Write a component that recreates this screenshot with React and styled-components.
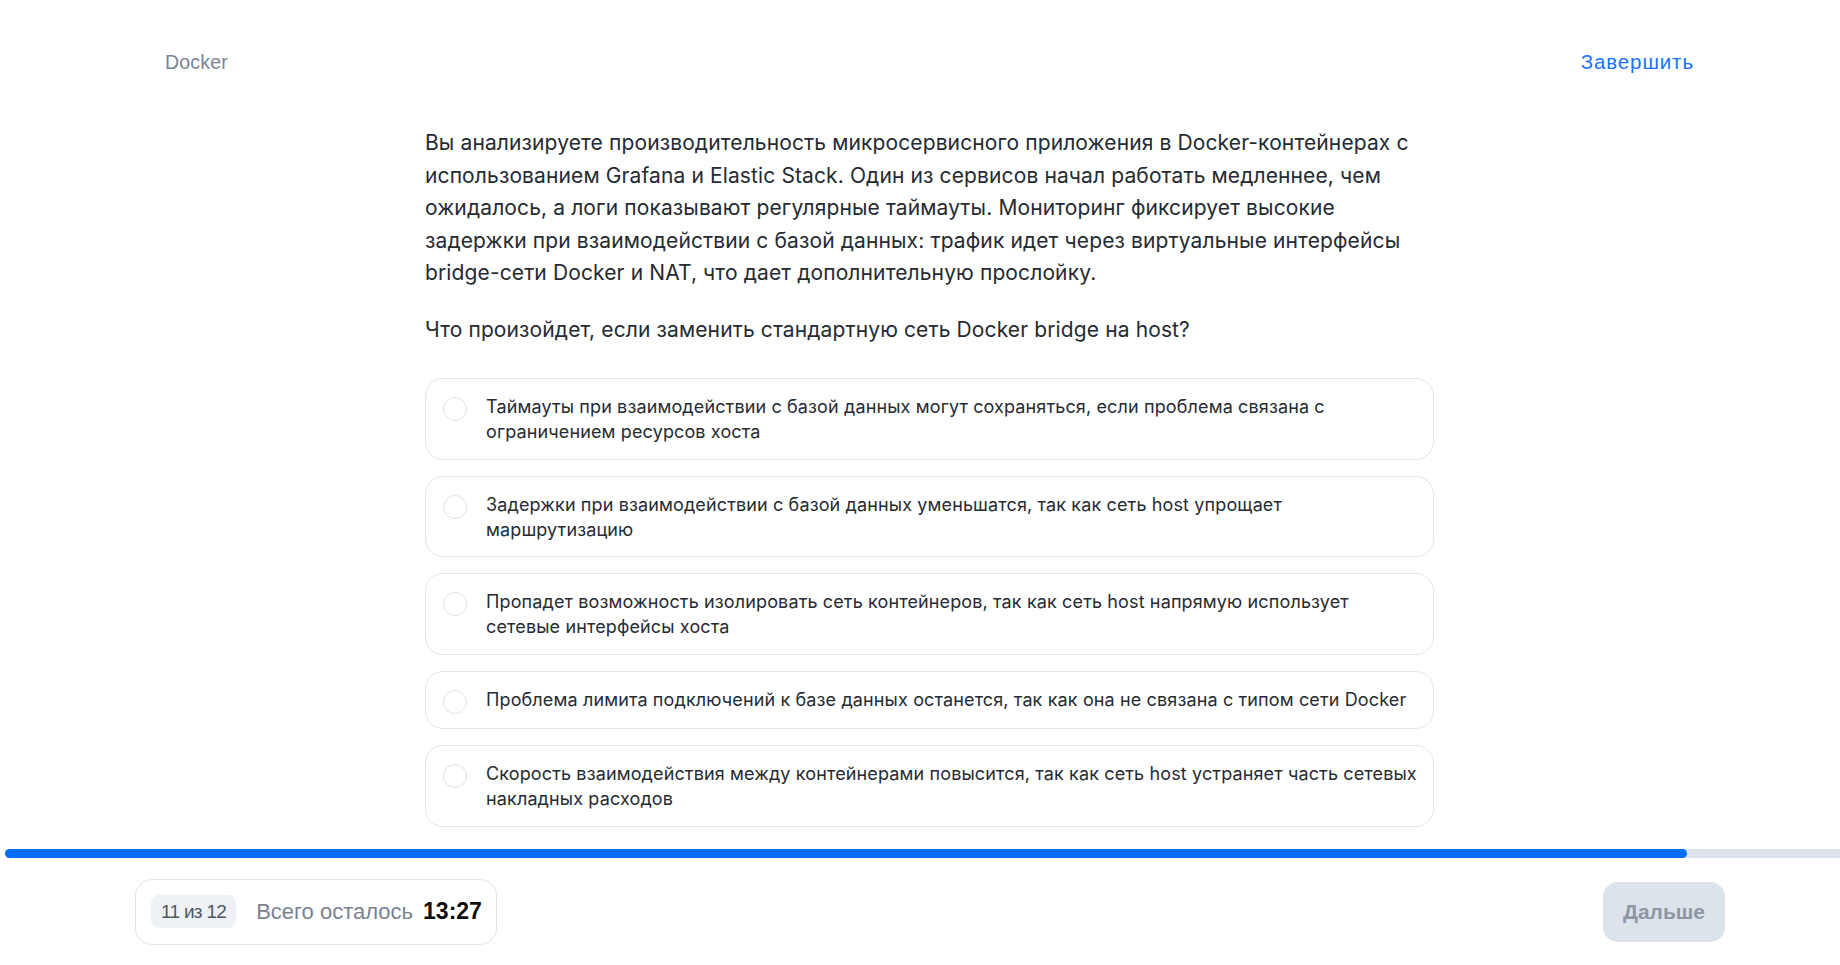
import React from 'react';
import styled, { createGlobalStyle } from 'styled-components';

const GlobalStyle = createGlobalStyle`
  * { box-sizing: border-box; }
  html, body {
    margin: 0;
    padding: 0;
    background: #ffffff;
  }
  body {
    font-family: 'Liberation Sans', Arial, sans-serif;
  }
`;

const Page = styled.div`
  min-height: 100vh;
  display: flex;
  flex-direction: column;
  overflow: hidden;
`;

const Header = styled.header`
  display: flex;
  justify-content: space-between;
  align-items: center;
  padding: 50px 146px 0 165px;
  height: 74px;
`;

const Crumb = styled.span`
  font-size: 19.5px;
  line-height: 24px;
  letter-spacing: 0.2px;
  color: #7b8594;
`;

const FinishLink = styled.a`
  font-size: 20.5px;
  line-height: 24px;
  letter-spacing: 0.9px;
  color: #1a72ff;
  text-decoration: none;
  cursor: pointer;
`;

const Main = styled.main`
  display: flex;
  justify-content: center;
  padding: 53px 0 0 19px;
`;

const Column = styled.div`
  width: 1009px;
  font-family: Inter, 'Noto Sans', sans-serif;
`;

const Paragraph = styled.p`
  margin: 0 0 24px;
  font-size: 21px;
  line-height: 32.5px;
  letter-spacing: 0.12px;
  color: #262a31;
`;

const Options = styled.div`
  display: flex;
  flex-direction: column;
  gap: 16px;
  margin-top: 32px;
`;

const Option = styled.label`
  display: flex;
  align-items: flex-start;
  gap: 19px;
  padding: 15px 10px 14.5px 17px;
  border: 1px solid #e2e6ed;
  border-radius: 18px;
  background: #fff;
  cursor: pointer;
`;

const Radio = styled.span`
  flex: 0 0 24px;
  width: 24px;
  height: 24px;
  margin-top: 3px;
  border-radius: 50%;
  border: 1.5px solid #dde3eb;
  background: #fff;
`;

const OptionText = styled.span`
  font-size: 18px;
  line-height: 25px;
  letter-spacing: 0.13px;
  color: #272b32;
`;

const Footer = styled.footer`
  margin-top: 22px;
  display: flex;
  flex-direction: column;
`;

const Track = styled.div`
  height: 9px;
  margin-left: 5px;
  background: #dde3ea;
  border-radius: 5px 0 0 5px;
`;

const Fill = styled.div`
  height: 100%;
  background: #006dff;
  border-radius: 5px;
`;

const BottomRow = styled.div`
  display: flex;
  justify-content: space-between;
  align-items: center;
  padding: 21px 115px 20px 135px;
`;

const TimerPill = styled.div`
  display: flex;
  align-items: center;
  height: 66px;
  padding: 0 14px 0 15px;
  border: 1px solid #dfe4ea;
  border-radius: 17px;
`;

const Counter = styled.span`
  display: inline-flex;
  align-items: center;
  height: 33px;
  padding: 0 10px;
  border-radius: 8px;
  background: #eef2f7;
  color: #4f5763;
  font-size: 19px;
  letter-spacing: -0.7px;
`;

const Remaining = styled.span`
  margin-left: 20px;
  font-size: 22px;
  color: #7b8390;
`;

const Time = styled.span`
  margin-left: 10px;
  font-size: 23px;
  font-weight: 700;
  color: #0d0f12;
`;

const NextButton = styled.button`
  height: 60px;
  padding: 0 20px;
  border: none;
  border-radius: 15px;
  background: #dde3eb;
  color: #8d97a4;
  font-family: 'Liberation Sans', Arial, sans-serif;
  font-size: 21px;
  font-weight: 700;
  cursor: not-allowed;
`;

const options = [
  'Таймауты при взаимодействии с базой данных могут сохраняться, если проблема связана с ограничением ресурсов хоста',
  'Задержки при взаимодействии с базой данных уменьшатся, так как сеть host упрощает маршрутизацию',
  'Пропадет возможность изолировать сеть контейнеров, так как сеть host напрямую использует сетевые интерфейсы хоста',
  'Проблема лимита подключений к базе данных останется, так как она не связана с типом сети Docker',
  'Скорость взаимодействия между контейнерами повысится, так как сеть host устраняет часть сетевых накладных расходов',
];

export default function App() {
  const current = 11;
  const total = 12;
  return (
    <>
      <GlobalStyle />
      <Page>
        <Header>
          <Crumb>Docker</Crumb>
          <FinishLink>Завершить</FinishLink>
        </Header>
        <Main>
          <Column>
            <Paragraph>
              Вы анализируете производительность микросервисного приложения в Docker-контейнерах с использованием Grafana и Elastic Stack. Один из сервисов начал работать медленнее, чем ожидалось, а логи показывают регулярные таймауты. Мониторинг фиксирует высокие задержки при взаимодействии с базой данных: трафик идет через виртуальные интерфейсы bridge-сети Docker и NAT, что дает дополнительную прослойку.
            </Paragraph>
            <Paragraph>Что произойдет, если заменить стандартную сеть Docker bridge на host?</Paragraph>
            <Options>
              {options.map((text) => (
                <Option key={text}>
                  <Radio />
                  <OptionText>{text}</OptionText>
                </Option>
              ))}
            </Options>
          </Column>
        </Main>
        <Footer>
          <Track>
            <Fill style={{ width: `${(current / total) * 100}%` }} />
          </Track>
          <BottomRow>
            <TimerPill>
              <Counter>{current} из {total}</Counter>
              <Remaining>Всего осталось</Remaining>
              <Time>13:27</Time>
            </TimerPill>
            <NextButton disabled>Дальше</NextButton>
          </BottomRow>
        </Footer>
      </Page>
    </>
  );
}
